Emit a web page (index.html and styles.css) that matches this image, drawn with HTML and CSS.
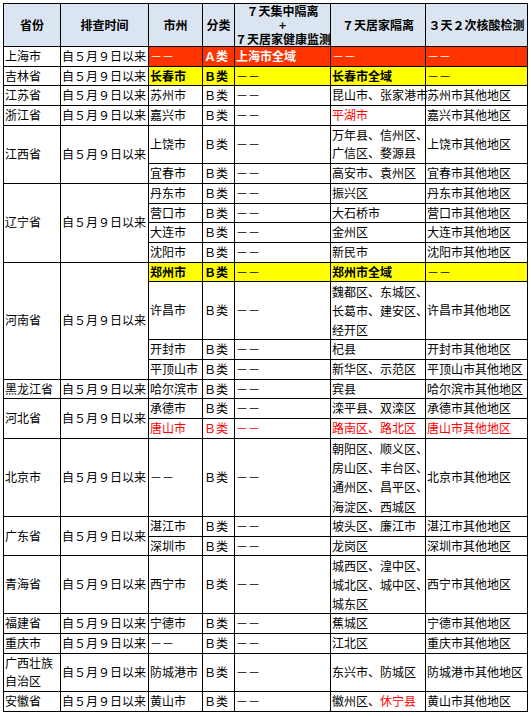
FILE: index.html
```html
<!DOCTYPE html>
<html lang="zh-CN">
<head>
<meta charset="utf-8">
<title>排查表</title>
<link rel="stylesheet" href="styles.css">
</head>
<body>
<table class="sheet">
  <colgroup>
    <col class="c1"><col class="c2"><col class="c3"><col class="c4"><col class="c5"><col class="c6"><col class="c7">
  </colgroup>
  <thead>
    <tr class="head">
      <th>省份</th>
      <th>排查时间</th>
      <th>市州</th>
      <th>分类</th>
      <th class="multi">７天集中隔离<br>+<br>７天居家健康监测</th>
      <th>７天居家隔离</th>
      <th>３天２次核酸检测</th>
    </tr>
  </thead>
  <tbody>
    <tr>
      <td>上海市</td><td>自５月９日以来</td>
      <td class="hot">－－</td><td class="hot b">Ａ类</td><td class="hot b">上海市全域</td><td class="hot">－－</td><td class="hot">－－</td>
    </tr>
    <tr>
      <td>吉林省</td><td>自５月９日以来</td>
      <td class="warn b">长春市</td><td class="warn b">Ｂ类</td><td class="warn">－－</td><td class="warn b">长春市全域</td><td class="warn">－－</td>
    </tr>
    <tr>
      <td>江苏省</td><td>自５月９日以来</td>
      <td>苏州市</td><td>Ｂ类</td><td>－－</td><td>昆山市、张家港市</td><td>苏州市其他地区</td>
    </tr>
    <tr>
      <td>浙江省</td><td>自５月９日以来</td>
      <td>嘉兴市</td><td>Ｂ类</td><td>－－</td><td class="red">平湖市</td><td>嘉兴市其他地区</td>
    </tr>
    <tr>
      <td rowspan="2">江西省</td><td rowspan="2">自５月９日以来</td>
      <td>上饶市</td><td>Ｂ类</td><td>－－</td><td class="l2">万年县、信州区、<br>广信区、婺源县</td><td>上饶市其他地区</td>
    </tr>
    <tr>
      <td>宜春市</td><td>Ｂ类</td><td>－－</td><td>高安市、袁州区</td><td>宜春市其他地区</td>
    </tr>
    <tr>
      <td rowspan="4">辽宁省</td><td rowspan="4">自５月９日以来</td>
      <td>丹东市</td><td>Ｂ类</td><td>－－</td><td>振兴区</td><td>丹东市其他地区</td>
    </tr>
    <tr>
      <td>营口市</td><td>Ｂ类</td><td>－－</td><td>大石桥市</td><td>营口市其他地区</td>
    </tr>
    <tr>
      <td>大连市</td><td>Ｂ类</td><td>－－</td><td>金州区</td><td>大连市其他地区</td>
    </tr>
    <tr>
      <td>沈阳市</td><td>Ｂ类</td><td>－－</td><td>新民市</td><td>沈阳市其他地区</td>
    </tr>
    <tr>
      <td rowspan="4">河南省</td><td rowspan="4">自５月９日以来</td>
      <td class="warn b">郑州市</td><td class="warn b">Ｂ类</td><td class="warn">－－</td><td class="warn b">郑州市全域</td><td class="warn">－－</td>
    </tr>
    <tr>
      <td>许昌市</td><td>Ｂ类</td><td>－－</td><td class="l3">魏都区、东城区、<br>长葛市、建安区、<br>经开区</td><td>许昌市其他地区</td>
    </tr>
    <tr>
      <td>开封市</td><td>Ｂ类</td><td>－－</td><td>杞县</td><td>开封市其他地区</td>
    </tr>
    <tr>
      <td>平顶山市</td><td>Ｂ类</td><td>－－</td><td>新华区、示范区</td><td>平顶山市其他地区</td>
    </tr>
    <tr>
      <td>黑龙江省</td><td>自５月９日以来</td>
      <td>哈尔滨市</td><td>Ｂ类</td><td>－－</td><td>宾县</td><td>哈尔滨市其他地区</td>
    </tr>
    <tr>
      <td rowspan="2">河北省</td><td rowspan="2">自５月９日以来</td>
      <td>承德市</td><td>Ｂ类</td><td>－－</td><td>滦平县、双滦区</td><td>承德市其他地区</td>
    </tr>
    <tr class="red">
      <td>唐山市</td><td>Ｂ类</td><td>－－</td><td>路南区、路北区</td><td>唐山市其他地区</td>
    </tr>
    <tr>
      <td>北京市</td><td>自５月９日以来</td>
      <td>－－</td><td>Ｂ类</td><td>－－</td><td class="l4">朝阳区、顺义区、<br>房山区、丰台区、<br>通州区、昌平区、<br>海淀区、西城区</td><td>北京市其他地区</td>
    </tr>
    <tr>
      <td rowspan="2">广东省</td><td rowspan="2">自５月９日以来</td>
      <td>湛江市</td><td>Ｂ类</td><td>－－</td><td>坡头区、廉江市</td><td>湛江市其他地区</td>
    </tr>
    <tr>
      <td>深圳市</td><td>Ｂ类</td><td>－－</td><td>龙岗区</td><td>深圳市其他地区</td>
    </tr>
    <tr>
      <td>青海省</td><td>自５月９日以来</td>
      <td>西宁市</td><td>Ｂ类</td><td>－－</td><td class="l3">城西区、湟中区、<br>城北区、城中区、<br>城东区</td><td>西宁市其他地区</td>
    </tr>
    <tr>
      <td>福建省</td><td>自５月９日以来</td>
      <td>宁德市</td><td>Ｂ类</td><td>－－</td><td>蕉城区</td><td>宁德市其他地区</td>
    </tr>
    <tr>
      <td>重庆市</td><td>自５月９日以来</td>
      <td>－－</td><td>Ｂ类</td><td>－－</td><td>江北区</td><td>重庆市其他地区</td>
    </tr>
    <tr>
      <td class="l2">广西壮族<br>自治区</td><td>自５月９日以来</td>
      <td>防城港市</td><td>Ｂ类</td><td>－－</td><td>东兴市、防城区</td><td>防城港市其他地区</td>
    </tr>
    <tr>
      <td>安徽省</td><td>自５月９日以来</td>
      <td>黄山市</td><td>Ｂ类</td><td>－－</td><td>徽州区、<span class="red">休宁县</span></td><td>黄山市其他地区</td>
    </tr>
  </tbody>
</table>
</body>
</html>
```

FILE: styles.css
```css
html, body {
  margin: 0;
  padding: 0;
  background: #ffffff;
}

body {
  padding: 3px 0 0 3px;
  font-family: "Noto Sans CJK SC", "Noto Sans", sans-serif;
  font-size: 12px;
  color: #000000;
}

.sheet {
  border-collapse: collapse;
  table-layout: fixed;
  width: 525px;
}

.c1 { width: 57px; }
.c2 { width: 88px; }
.c3 { width: 54px; }
.c4 { width: 32px; }
.c5 { width: 96px; }
.c6 { width: 95px; }
.c7 { width: 102px; }

.sheet th,
.sheet td {
  border: 1px solid #000000;
  padding: 0 0 0 1px;
  line-height: 18.7px;
  white-space: nowrap;
  overflow: visible;
  vertical-align: middle;
  text-align: left;
}

.sheet th {
  background: #dbe5f1;
  font-weight: bold;
  text-align: center;
  line-height: 14px;
  height: 42px;
  padding: 0;
}

.sheet td.l2 { line-height: 18.65px; }
.sheet td.l3 { line-height: 19px; }
.sheet td.l4 { line-height: 19.25px; }

.hot {
  background: #ff3300;
  color: #ffffff;
}

.warn {
  background: #ffff00;
}

.b {
  font-weight: bold;
}

.red,
.red td {
  color: #ff0000;
}
```
